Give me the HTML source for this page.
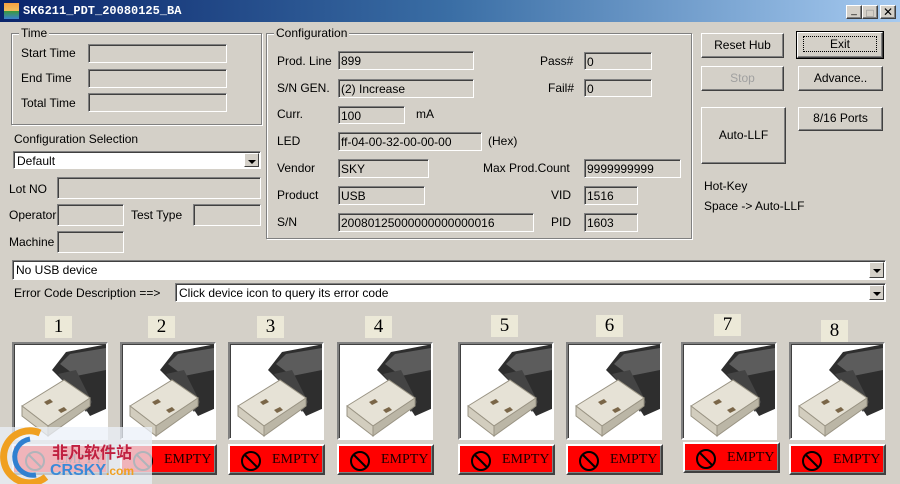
<!DOCTYPE html>
<html><head><meta charset="utf-8"><style>
*{margin:0;padding:0;box-sizing:border-box}
body{width:900px;height:484px;overflow:hidden;background:#d4d0c8;font-family:"Liberation Sans","DejaVu Sans",sans-serif;font-size:12px;color:#000;position:relative}
.a{position:absolute}
.t{position:absolute;white-space:nowrap;line-height:14px}
.f{position:absolute;background:#d4d0c8;border-top:1px solid #808080;border-left:1px solid #808080;border-right:1px solid #fff;border-bottom:1px solid #fff;box-shadow:inset 1px 1px 0 #404040;padding:3px 0 0 2px;line-height:13px;white-space:nowrap}
.g{position:absolute;border:1px solid #808080;box-shadow:1px 1px 0 #fff,inset 1px 1px 0 #fff}
.gl{position:absolute;top:-8px;left:7px;background:#d4d0c8;padding:0 2px;line-height:14px}
.b{position:absolute;border:1px solid;border-color:#fff #404040 #404040 #fff;box-shadow:inset -1px -1px 0 #808080;text-align:center;background:#d4d0c8}
.c{position:absolute;background:#fff;border-top:1px solid #808080;border-left:1px solid #808080;border-right:1px solid #fff;border-bottom:1px solid #fff;box-shadow:inset 1px 1px 0 #404040;padding:3px 0 0 3px;line-height:13px}
.dd{position:absolute;right:1px;top:1px;bottom:1px;width:15px;background:#d4d0c8;border:1px solid;border-color:#fff #404040 #404040 #fff}
.dd:after{content:"";position:absolute;left:3px;top:6px;border-left:4px solid transparent;border-right:4px solid transparent;border-top:4px solid #000}
.n{position:absolute;width:27px;height:22px;background:#ece9d8;font-family:"Liberation Serif",serif;font-size:19px;text-align:center;line-height:22px}
.fr{position:absolute;width:96px;height:98px;background:#fff;border:2px solid;border-color:#808080 #fff #fff #808080;box-shadow:inset 1px 1px 0 #404040;overflow:hidden}
.e{position:absolute;width:97px;height:31px;background:#f00;border:2px solid;border-color:#fff #404040 #404040 #fff;box-shadow:inset -1px -1px 0 #808080;font-family:"Liberation Serif",serif;font-size:14px;color:#1a0000;line-height:27px;padding-left:42px}
.e svg{position:absolute;left:10px;top:4px}
</style></head><body>
<div class="a" style="left:0;top:0;width:900px;height:22px;background:linear-gradient(90deg,#0a246a,#3a6ea5 50%,#a6caf0)"></div>
<div class="a" style="left:4px;top:3px;width:15px;height:16px;background:linear-gradient(#f6a040,#f0c060 50%,#3a9a3a 50%,#3a80d0)"></div>
<div class="t" style="left:23px;top:4px;color:#fff;font-family:'Liberation Mono',monospace;font-weight:bold;font-size:12px">SK6211_PDT_20080125_BA</div>
<div class="b" style="left:846px;top:5px;width:16px;height:14px;font-size:10px;line-height:10px">_</div>
<div class="b" style="left:862px;top:5px;width:16px;height:14px;color:#888">□</div>
<div class="b" style="left:880px;top:5px;width:16px;height:14px;font-weight:bold;line-height:12px">✕</div>

<div class="g" style="left:11px;top:33px;width:251px;height:92px"><span class="gl">Time</span></div>
<div class="t" style="left:21px;top:46px">Start Time</div><div class="f" style="left:88px;top:44px;width:139px;height:19px"></div>
<div class="t" style="left:21px;top:71px">End Time</div><div class="f" style="left:88px;top:69px;width:139px;height:19px"></div>
<div class="t" style="left:21px;top:96px">Total Time</div><div class="f" style="left:88px;top:93px;width:139px;height:19px"></div>

<div class="t" style="left:14px;top:132px">Configuration Selection</div>
<div class="c" style="left:13px;top:151px;width:248px;height:18px">Default<div class="dd"></div></div>
<div class="t" style="left:9px;top:182px">Lot NO</div><div class="f" style="left:57px;top:177px;width:204px;height:22px"></div>
<div class="t" style="left:9px;top:208px">Operator</div><div class="f" style="left:57px;top:204px;width:67px;height:22px"></div>
<div class="t" style="left:131px;top:208px">Test Type</div><div class="f" style="left:193px;top:204px;width:68px;height:22px"></div>
<div class="t" style="left:9px;top:235px">Machine</div><div class="f" style="left:57px;top:231px;width:67px;height:22px"></div>

<div class="g" style="left:266px;top:33px;width:426px;height:206px"><span class="gl">Configuration</span></div>
<div class="t" style="left:277px;top:54px">Prod. Line</div><div class="f" style="left:338px;top:51px;width:136px;height:19px">899</div>
<div class="t" style="left:277px;top:81px">S/N GEN.</div><div class="f" style="left:338px;top:79px;width:136px;height:19px">(2) Increase</div>
<div class="t" style="left:277px;top:107px">Curr.</div><div class="f" style="left:338px;top:106px;width:67px;height:18px">100</div><div class="t" style="left:416px;top:107px">mA</div>
<div class="t" style="left:277px;top:134px">LED</div><div class="f" style="left:338px;top:132px;width:144px;height:19px">ff-04-00-32-00-00-00</div><div class="t" style="left:488px;top:134px">(Hex)</div>
<div class="t" style="left:277px;top:161px">Vendor</div><div class="f" style="left:338px;top:159px;width:91px;height:19px">SKY</div>
<div class="t" style="left:277px;top:188px">Product</div><div class="f" style="left:338px;top:186px;width:87px;height:19px">USB</div>
<div class="t" style="left:277px;top:215px">S/N</div><div class="f" style="left:338px;top:213px;width:196px;height:19px">20080125000000000000016</div>
<div class="t" style="left:540px;top:54px">Pass#</div><div class="f" style="left:584px;top:52px;width:68px;height:18px">0</div>
<div class="t" style="left:548px;top:81px">Fail#</div><div class="f" style="left:584px;top:79px;width:68px;height:18px">0</div>
<div class="t" style="left:483px;top:161px">Max Prod.Count</div><div class="f" style="left:584px;top:159px;width:97px;height:19px">9999999999</div>
<div class="t" style="left:551px;top:188px">VID</div><div class="f" style="left:584px;top:186px;width:54px;height:19px">1516</div>
<div class="t" style="left:551px;top:215px">PID</div><div class="f" style="left:584px;top:213px;width:54px;height:19px">1603</div>

<div class="b" style="left:701px;top:33px;width:83px;height:25px;line-height:22px">Reset Hub</div>
<div class="b" style="left:797px;top:32px;width:86px;height:26px;line-height:22px;outline:1px solid #000"><span style="outline:1px dotted #000;padding:0 26px">Exit</span></div>
<div class="b" style="left:701px;top:66px;width:83px;height:25px;line-height:22px;color:#a0a0a0">Stop</div>
<div class="b" style="left:798px;top:66px;width:85px;height:25px;line-height:22px">Advance..</div>
<div class="b" style="left:701px;top:107px;width:85px;height:57px;line-height:55px">Auto-LLF</div>
<div class="b" style="left:798px;top:107px;width:85px;height:24px;line-height:21px">8/16 Ports</div>
<div class="t" style="left:704px;top:179px">Hot-Key</div>
<div class="t" style="left:704px;top:199px">Space -&gt; Auto-LLF</div>

<div class="c" style="left:12px;top:260px;width:874px;height:20px">No USB device<div class="dd"></div></div>
<div class="t" style="left:14px;top:286px">Error Code Description ==&gt;</div>
<div class="c" style="left:175px;top:283px;width:711px;height:19px">Click device icon to query its error code<div class="dd"></div></div>

<svg width="0" height="0" style="position:absolute"><defs>
<g id="usb">
<path d="M38 26 L52 8 L94 0 L94 64 L76 72 L62 50 Z" fill="#2e2e2e"/>
<path d="M46 20 L56 10 L92 4 L92 26 L62 32 Z" fill="#5c5c5c"/>
<path d="M44 30 L62 26 L78 58 L72 68 Z" fill="#444"/>
<path d="M8 62 L50 36 L76 54 L34 82 Z" fill="#e6e2d6" stroke="#9a9484"/>
<path d="M8 62 L34 82 L34 92 L8 72 Z" fill="#d2cdbe" stroke="#9a9484"/>
<path d="M34 82 L76 54 L76 62 L34 92 Z" fill="#bbb6a6" stroke="#9a9484"/>
<path d="M30 58 L36 55 L39 58 L33 61 Z" fill="#7a6648"/>
<path d="M44 66 L50 63 L53 66 L47 69 Z" fill="#7a6648"/>
</g>
<g id="no"><circle cx="11" cy="11" r="9" fill="none" stroke="#000" stroke-width="2"/><line x1="5" y1="5" x2="17" y2="17" stroke="#000" stroke-width="2"/></g>
</defs></svg>

<div class="n" style="left:45px;top:316px">1</div>
<div class="n" style="left:148px;top:316px">2</div>
<div class="n" style="left:257px;top:316px">3</div>
<div class="n" style="left:365px;top:316px">4</div>
<div class="n" style="left:491px;top:315px">5</div>
<div class="n" style="left:596px;top:315px">6</div>
<div class="n" style="left:714px;top:314px">7</div>
<div class="n" style="left:821px;top:320px">8</div>

<div class="fr" style="left:12px;top:342px"><svg width="94" height="96"><use href="#usb"/></svg></div>
<div class="fr" style="left:120px;top:342px"><svg width="94" height="96"><use href="#usb"/></svg></div>
<div class="fr" style="left:228px;top:342px"><svg width="94" height="96"><use href="#usb"/></svg></div>
<div class="fr" style="left:337px;top:342px"><svg width="94" height="96"><use href="#usb"/></svg></div>
<div class="fr" style="left:458px;top:342px"><svg width="94" height="96"><use href="#usb"/></svg></div>
<div class="fr" style="left:566px;top:342px"><svg width="94" height="96"><use href="#usb"/></svg></div>
<div class="fr" style="left:681px;top:342px"><svg width="94" height="96"><use href="#usb"/></svg></div>
<div class="fr" style="left:789px;top:342px"><svg width="94" height="96"><use href="#usb"/></svg></div>

<div class="e" style="left:12px;top:444px"><svg width="22" height="22"><use href="#no"/></svg>EMPTY</div>
<div class="e" style="left:120px;top:444px"><svg width="22" height="22"><use href="#no"/></svg>EMPTY</div>
<div class="e" style="left:228px;top:444px"><svg width="22" height="22"><use href="#no"/></svg>EMPTY</div>
<div class="e" style="left:337px;top:444px"><svg width="22" height="22"><use href="#no"/></svg>EMPTY</div>
<div class="e" style="left:458px;top:444px"><svg width="22" height="22"><use href="#no"/></svg>EMPTY</div>
<div class="e" style="left:566px;top:444px"><svg width="22" height="22"><use href="#no"/></svg>EMPTY</div>
<div class="e" style="left:683px;top:442px"><svg width="22" height="22"><use href="#no"/></svg>EMPTY</div>
<div class="e" style="left:789px;top:444px"><svg width="22" height="22"><use href="#no"/></svg>EMPTY</div>

<div class="a" style="left:0;top:427px;width:152px;height:57px;background:rgba(235,240,248,0.75)"></div>
<svg class="a" style="left:0;top:425px" width="60" height="59"><path d="M40 8 A26 26 0 1 0 46 52" fill="none" stroke="#f0a020" stroke-width="7"/><path d="M30 14 A18 18 0 1 0 36 50" fill="none" stroke="#3080d0" stroke-width="5"/></svg>
<div class="t" style="left:52px;top:442px;font-family:'Noto Sans CJK SC',sans-serif;font-weight:bold;font-size:16px;color:#c02040;line-height:18px">非凡软件站</div>
<div class="t" style="left:50px;top:463px;font-weight:bold;font-size:16px;color:#3a8ad8;line-height:16px">CRSKY<span style="font-size:12px;color:#f0a020">.com</span></div>
</body></html>
